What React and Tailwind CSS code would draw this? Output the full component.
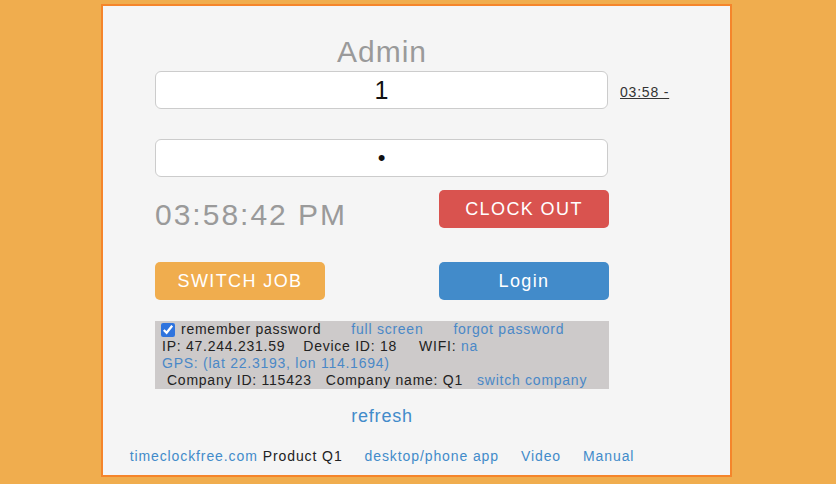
import { useState } from 'react'

const font = { fontFamily: '"Liberation Sans", Arial, sans-serif' }

function Btn({ children, className }) {
  return (
    <button
      className={`h-[38px] w-[170px] rounded-[5px] text-[18px] tracking-[1.4px] text-white ${className}`}
    >
      {children}
    </button>
  )
}

export default function App() {
  const [remember, setRemember] = useState(true)

  return (
    <div className="min-h-[484px] w-full bg-[#f0ad4e] pt-[4px]" style={font}>
      <div className="ml-[101px] h-[473px] w-[631px] border-2 border-[#f5852b] bg-[#f5f5f5] pl-[52px]">
        <div className="flex">
          <div className="w-[454px]">
            <div className="mt-[28px] text-center text-[30px] leading-[36px] tracking-[1px] text-[#9a9a9a]">
              Admin
            </div>
            <input
              readOnly
              defaultValue="1"
              className="mt-[1px] block h-[38px] w-[453px] rounded-[6px] border border-[#cccccc] bg-white text-center text-[25px] text-[#111] outline-none"
            />
            <input
              readOnly
              type="password"
              defaultValue="1"
              className="mt-[30px] block h-[38px] w-[453px] rounded-[6px] border border-[#cccccc] bg-white text-center text-[22px] text-[#111] outline-none"
            />

            <div className="mt-[13px] flex items-start justify-between">
              <div className="mt-[7px] text-[30px] leading-[36px] tracking-[2px] text-[#9a9a9a]">
                03:58:42 PM
              </div>
              <Btn className="bg-[#d9534f]">CLOCK OUT</Btn>
            </div>

            <div className="mt-[29px] flex justify-between">
              <Btn className="bg-[#f0ad4e]">SWITCH JOB</Btn>
              <Btn className="bg-[#428bca]">Login</Btn>
            </div>

            <div className="mt-[21px] bg-[#cdcaca] text-[14px] leading-[17px] tracking-[0.75px] text-[#222] whitespace-nowrap">
              <div className="flex items-center">
                <input
                  type="checkbox"
                  checked={remember}
                  onChange={() => setRemember(!remember)}
                  className="ml-[6px] mr-[6px] h-[14px] w-[14px] accent-[#2f74de]"
                />
                <span>remember password</span>
                <a className="ml-[30px] text-[#4a88c7]">full screen</a>
                <a className="ml-[30px] text-[#4a88c7]">forgot password</a>
              </div>
              <div className="flex">
                <span className="ml-[7px]">IP: 47.244.231.59</span>
                <span className="ml-[18px]">Device ID: 18</span>
                <span className="ml-[22px]">
                  WIFI: <a className="text-[#4a88c7]">na</a>
                </span>
              </div>
              <div className="ml-[7px] text-[#4a88c7]">GPS: (lat 22.3193, lon 114.1694)</div>
              <div className="flex">
                <span className="ml-[12px]">Company ID: 115423</span>
                <span className="ml-[14px]">Company name: Q1</span>
                <a className="ml-[14px] text-[#4a88c7]">switch company</a>
              </div>
            </div>

            <div className="mt-[16px] text-center text-[18px] leading-[22px] tracking-[0.8px] text-[#428bca]">
              refresh
            </div>

            <div className="mt-[20px] flex justify-center whitespace-nowrap text-[14px] leading-[18px] tracking-[0.9px]">
              <a className="text-[#428bca]">timeclockfree.com</a>
              <span className="ml-[5px] text-[#222]">Product Q1</span>
              <a className="ml-[22px] text-[#428bca]">desktop/phone app</a>
              <a className="ml-[22px] text-[#428bca]">Video</a>
              <a className="ml-[22px] text-[#428bca]">Manual</a>
            </div>
          </div>

          <div className="ml-[11px] mt-[74px]">
            <a className="text-[14px] leading-[16px] tracking-[0.8px] text-[#333] underline">03:58 -</a>
          </div>
        </div>
      </div>
    </div>
  )
}
